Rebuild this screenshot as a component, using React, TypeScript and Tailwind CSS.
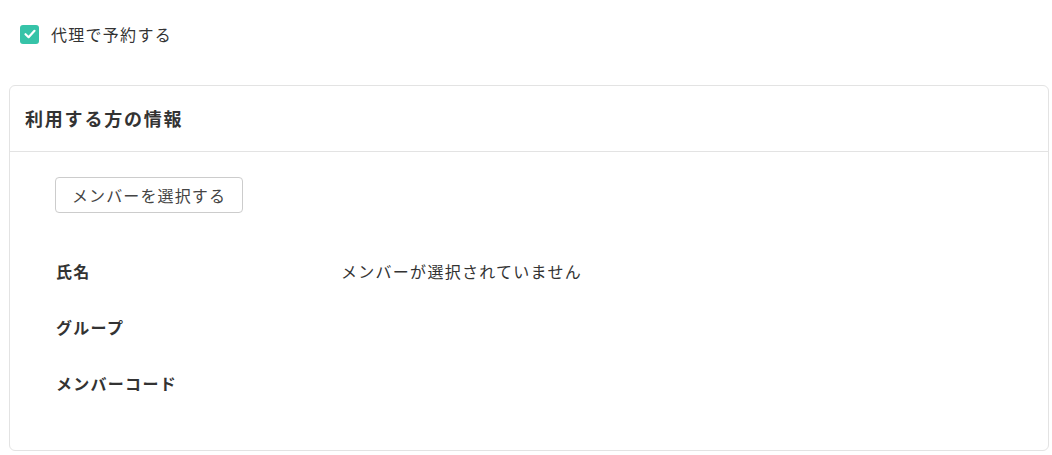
import React from "react";

const rows = [
  { label: "氏名", value: "メンバーが選択されていません" },
  { label: "グループ", value: "" },
  { label: "メンバーコード", value: "" },
];

export default function App() {
  return (
    <div
      className="w-[1052px] h-[455px] bg-white pl-[9px] pr-[3px] pt-[22px] text-[#333333]"
      style={{ fontFamily: '"Noto Sans CJK JP", "Noto Sans", sans-serif' }}
    >
      <label className="ml-[11px] flex items-center gap-[12px] h-6 text-[16px] tracking-[0.08em]">
        <span className="w-[19px] h-[19px] rounded-[3px] bg-[#36c3a8] flex items-center justify-center">
          <svg width="14" height="14" viewBox="0 0 14 14" fill="none">
            <path d="M2.5 7.2 L5.6 10.2 L11.5 3.8" stroke="white" strokeWidth="2.2" strokeLinecap="round" strokeLinejoin="round" />
          </svg>
        </span>
        代理で予約する
      </label>

      <div className="mt-[39px] border border-[#e3e3e3] rounded-[6px]">
        <div className="h-[66px] px-[15px] flex items-center border-b border-[#e3e3e3]">
          <h2 className="text-[18px] font-bold tracking-[0.1em]">利用する方の情報</h2>
        </div>
        <div className="pl-[45px] pt-[25px] pb-[39px]">
          <button className="h-[36px] px-[16px] border border-[#cccccc] rounded-[4px] text-[16px] tracking-[0.07em] text-[#444444] bg-white">
            メンバーを選択する
          </button>
          <div className="mt-[30px]">
            {rows.map((r) => (
              <div key={r.label} className="h-[56px] flex items-center text-[16px] tracking-[0.08em]">
                <div className="w-[286px] pl-px font-bold">{r.label}</div>
                <div>{r.value}</div>
              </div>
            ))}
          </div>
        </div>
      </div>
    </div>
  );
}
